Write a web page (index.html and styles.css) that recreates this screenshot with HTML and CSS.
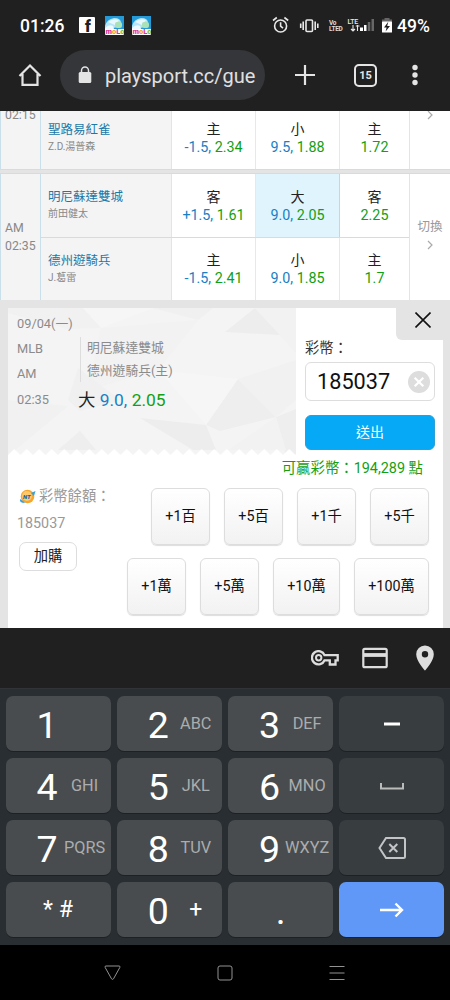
FILE: index.html
```html
<!DOCTYPE html>
<html lang="zh-Hant">
<head>
<meta charset="utf-8">
<title>playsport.cc</title>
<link rel="stylesheet" href="styles.css">
</head>
<body>
<header class="status">
  <span class="clock">01:26</span>
  <svg class="fb" width="16" height="16" viewBox="0 0 16 16"><rect width="16" height="16" rx="1" fill="#fff"/><text x="6" y="14.500" class="fb-f">f</text></svg>
  <svg class="molo" width="19" height="19" viewBox="0 0 19 19"><rect width="19" height="19" rx="1" fill="#fff"/><rect width="19" height="13" fill="#249bd8"/><path d="M0 10Q2 3 9 2Q16 2 16 7L12 11L5 13H0Z" fill="#b5e5f8"/><path d="M0 12Q4 8 8 10L9 13H0Z" fill="#eefaff"/><path d="M3 6Q8 2 14 4L10 9Z" fill="#e9f8ff"/><rect x="10" y="6" width="7" height="6" rx="2" fill="#a9e2b6"/><text x="0.5" y="17.8" class="molo-t"><tspan fill="#e0389a">m</tspan><tspan fill="#f59a22">o</tspan><tspan fill="#e0389a">L</tspan><tspan fill="#83bd38">o</tspan></text></svg>
  <svg class="molo" width="19" height="19" viewBox="0 0 19 19"><rect width="19" height="19" rx="1" fill="#fff"/><rect width="19" height="13" fill="#249bd8"/><path d="M0 10Q2 3 9 2Q16 2 16 7L12 11L5 13H0Z" fill="#b5e5f8"/><path d="M0 12Q4 8 8 10L9 13H0Z" fill="#eefaff"/><path d="M3 6Q8 2 14 4L10 9Z" fill="#e9f8ff"/><rect x="10" y="6" width="7" height="6" rx="2" fill="#a9e2b6"/><text x="0.5" y="17.8" class="molo-t"><tspan fill="#e0389a">m</tspan><tspan fill="#f59a22">o</tspan><tspan fill="#e0389a">L</tspan><tspan fill="#83bd38">o</tspan></text></svg>
  <svg class="sys" width="124" height="20" viewBox="0 0 124 20">
    <g fill="none" stroke="#e8e8e8" stroke-width="1.6"><circle cx="8.6" cy="11" r="6"/><path d="M8.6 7.3V11.2L11 13.2M1 5.5L4.8 2.5M12.4 2.5L16.2 5.5"/>
    <rect x="34" y="5" width="6.5" height="11.5" rx="1"/><path d="M31.2 6.5V15M43.2 6.5V15M28.7 8.5V13M45.8 8.5V13"/></g>
    <text x="57" y="9.5" class="tiny">Vo</text><text x="57" y="15.6" class="tiny">LTED</text>
    <text x="75.5" y="8.8" class="lte">LTE</text><path d="M81 10V16M79 14L81 16L83 14M85.5 16V10M83.8 11H87.5" stroke="#e8e8e8" stroke-width="1.1" fill="none"/>
    <path d="M88 12.5h3V16h-3zM92 10h2.500v6H92z" fill="#fff"/><path d="M95.800 7h2.500v9h-2.500zM99.500 4h2.500v12h-2.500z" fill="#676767"/>
    <path d="M112.500 3h5v1.500h2.500V8h-10V4.500h2.500z" fill="#666"/><rect x="110" y="6.500" width="10" height="11" rx=".6" fill="#fff"/><path d="M116.300 6.800L112 12.600h2.600l-1 4L118 11h-2.800z" fill="#202020"/>
  </svg>
  <span class="battery">49%</span>
</header>

<nav class="toolbar">
  <svg class="home" width="24" height="24" viewBox="0 0 24 24"><path d="M1.500 13L12 2.500L22.500 13M4.500 11V21.800H19.500V11" fill="none" stroke="#e4e4e4" stroke-width="2.200"/></svg>
  <div class="url">
    <svg width="14" height="18" viewBox="0 0 14 18"><rect x=".7" y="6" width="12.600" height="11" rx="1.500" fill="#e4e4e4"/><path d="M3.500 7V4.500a3.500 3.500 0 0 1 7 0V7" fill="none" stroke="#e4e4e4" stroke-width="1.500"/></svg>
    <span>playsport.cc/gue</span>
  </div>
  <svg class="plus" width="20" height="20" viewBox="0 0 20 20"><path d="M10 0V20M0 10H20" stroke="#e4e4e4" stroke-width="2.200"/></svg>
  <span class="tabs">15</span>
  <svg class="dots" width="6" height="22" viewBox="0 0 6 22"><g fill="#e4e4e4"><circle cx="3" cy="3.500" r="2.700"/><circle cx="3" cy="11" r="2.700"/><circle cx="3" cy="18.500" r="2.700"/></g></svg>
</nav>

<main class="page">
  <section class="game game-cut">
    <div class="time"><span>02:15</span></div>
    <div class="rows">
      <div class="row">
        <div class="team"><b>聖路易紅雀</b><i>Z.D.湯普森</i></div>
        <div class="odd"><b>主</b><p><em>-1.5,</em> 2.34</p></div>
        <div class="odd"><b>小</b><p><em>9.5,</em> 1.88</p></div>
        <div class="odd"><b>主</b><p>1.72</p></div>
      </div>
    </div>
    <div class="switch"><svg width="6" height="10" viewBox="0 0 6 10"><path d="M1 1L5 5L1 9" fill="none" stroke="#aaa" stroke-width="1.200"/></svg></div>
  </section>
  <section class="game">
    <div class="time"><span>AM</span><span>02:35</span></div>
    <div class="rows">
      <div class="row">
        <div class="team"><b>明尼蘇達雙城</b><i>前田健太</i></div>
        <div class="odd"><b>客</b><p><em>+1.5,</em> 1.61</p></div>
        <div class="odd picked"><b>大</b><p><em>9.0,</em> 2.05</p></div>
        <div class="odd"><b>客</b><p>2.25</p></div>
      </div>
      <div class="row">
        <div class="team"><b>德州遊騎兵</b><i>J.葛雷</i></div>
        <div class="odd"><b>主</b><p><em>-1.5,</em> 2.41</p></div>
        <div class="odd"><b>小</b><p><em>9.0,</em> 1.85</p></div>
        <div class="odd"><b>主</b><p>1.7</p></div>
      </div>
    </div>
    <div class="switch"><span>切換</span><svg width="6" height="10" viewBox="0 0 6 10"><path d="M1 1L5 5L1 9" fill="none" stroke="#aaa" stroke-width="1.200"/></svg></div>
  </section>

  <section class="slip">
    <div class="slip-top">
      <div class="ticket">
        <svg class="facets" width="288" height="148" viewBox="0 0 288 148">
          <defs><pattern id="zig" width="12.500" height="6" patternUnits="userSpaceOnUse" y="141"><path d="M0 6L6.250 0L12.500 6Z" fill="#fff"/></pattern></defs>
          <rect width="288" height="148" fill="#f4f4f4"/>
          <path d="M0 0H75L93 20L60 21L0 5Z" fill="#f1f1f1"/><path d="M75 0H145L93 20Z" fill="#f6f6f6"/>
          <path d="M145 0H205L190 12Z" fill="#f0f0f0"/><path d="M93 20L190 12L150 62L80 82Z" fill="#f2f2f2"/>
          <path d="M247 0L217 24L272 27Z" fill="#ededed"/><path d="M247 0H288V45L272 27Z" fill="#f2f2f2"/>
          <path d="M60 92L70 60L112 92L72 103Z" fill="#f0f0f0"/><path d="M0 92L60 98L0 148Z" fill="#f1f1f1"/>
          <path d="M132 110L198 117L208 142H185Z" fill="#ededed"/><path d="M72 123L88 142H50Z" fill="#eee"/>
          <path d="M198 117L230 71L268 109L212 123Z" fill="#eee"/><path d="M230 71L268 109L288 92V52Z" fill="#f1f1f1"/>
          <path d="M268 109L288 101V148H278Z" fill="#eee"/><path d="M268 109L278 142H220Z" fill="#f2f2f2"/>
          <path d="M150 62L230 71L198 117Z" fill="#f6f6f6"/>
          <rect y="141" width="288" height="6" fill="url(#zig)"/><rect y="147" width="288" height="2" fill="#fff"/>
        </svg>
        <div class="when"><span>09/04(一)</span><span>MLB</span><span>AM</span><span>02:35</span></div>
        <div class="match">
          <div class="teams"><span>明尼蘇達雙城</span><span>德州遊騎兵(主)</span></div>
          <div class="choice"><b>大</b> <em>9.0,</em> <strong>2.05</strong></div>
        </div>
      </div>
      <div class="stake">
        <div class="close"><svg width="16" height="16" viewBox="0 0 16 16"><path d="M.5 .5L15.500 15.500M15.500 .5L.5 15.500" stroke="#111" stroke-width="1.600"/></svg></div>
        <label>彩幣：</label>
        <div class="amount"><span>185037</span><svg width="22" height="22" viewBox="0 0 22 22"><circle cx="11" cy="11" r="11" fill="#ddd"/><path d="M6.700 6.700L15.300 15.300M15.300 6.700L6.700 15.300" stroke="#fff" stroke-width="2.200"/></svg></div>
        <div class="send">送出</div>
      </div>
    </div>
    <div class="win">可贏彩幣：194,289 點</div>
    <div class="slip-bottom">
      <div class="balance">
        <div class="coin"><svg width="17" height="17" viewBox="0 0 17 17"><circle cx="8.500" cy="8.500" r="6.800" fill="#f8a52d"/><circle cx="8" cy="8" r="5" fill="#ffc96b"/><path d="M1 11Q0 15 6 15L4 13ZM12 5L16.500 3L15 8Z" fill="#32a2e2"/><text x="4" y="11" class="nt">NT</text></svg><span>彩幣餘額：</span></div>
        <div class="points">185037</div>
        <div class="buy">加購</div>
      </div>
      <div class="chips">
        <div class="chip-row"><span>+1百</span><span>+5百</span><span>+1千</span><span>+5千</span></div>
        <div class="chip-row"><span>+1萬</span><span>+5萬</span><span class="w67">+10萬</span><span class="w75">+100萬</span></div>
      </div>
    </div>
  </section>
</main>

<div class="autofill">
  <svg width="28" height="16" viewBox="0 0 28 16"><path d="M13.600 5.200H26.700V10.300H24.500V14.500H18.800V10.300H13.600A6.600 6.600 0 1 1 13.600 5.200Z" fill="none" stroke="#ddd" stroke-width="2.300"/><circle cx="7.700" cy="7.800" r="2.700" fill="none" stroke="#ddd" stroke-width="2"/></svg>
  <svg width="26" height="22" viewBox="0 0 26 22"><rect x="1.300" y="1.800" width="23.400" height="18.400" rx="1.500" fill="none" stroke="#ddd" stroke-width="2.200"/><path d="M1 8H25" stroke="#ddd" stroke-width="3.800"/></svg>
  <svg width="18" height="26" viewBox="0 0 18 26"><path d="M9 .5A8.700 8.700 0 0 0 .2 9.200C.2 16 9 25.500 9 25.500S17.800 16 17.800 9.200A8.700 8.700 0 0 0 9 .5ZM9 6A3.200 3.200 0 1 1 9 12.400A3.200 3.200 0 0 1 9 6Z" fill="#ddd"/></svg>
</div>

<section class="keyboard">
  <div class="key"><b>1</b></div><div class="key"><b>2</b><i>ABC</i></div><div class="key"><b>3</b><i>DEF</i></div>
  <div class="key fn"><svg width="16" height="4" viewBox="0 0 16 4"><path d="M0 2H16" stroke="#fff" stroke-width="3"/></svg></div>
  <div class="key"><b>4</b><i>GHI</i></div><div class="key"><b>5</b><i>JKL</i></div><div class="key"><b>6</b><i>MNO</i></div>
  <div class="key fn"><svg width="24" height="8" viewBox="0 0 24 8"><path d="M1 1V6.500H23V1" fill="none" stroke="#bbb" stroke-width="2"/></svg></div>
  <div class="key"><b>7</b><i>PQRS</i></div><div class="key"><b>8</b><i>TUV</i></div><div class="key"><b>9</b><i>WXYZ</i></div>
  <div class="key fn"><svg width="28" height="22" viewBox="0 0 28 22"><path d="M8 1H25.500Q27 1 27 2.500V19.500Q27 21 25.500 21H8L1.500 11Z" fill="none" stroke="#c2c4c5" stroke-width="2"/><path d="M11.300 7L19.300 15M19.300 7L11.300 15" stroke="#c2c4c5" stroke-width="2"/></svg></div>
  <div class="key sym"><span>* #</span></div><div class="key"><b>0</b><i class="plus-sign">+</i></div><div class="key dot"><b>.</b></div>
  <div class="key fn go"><svg width="24" height="16" viewBox="0 0 24 16"><path d="M0 8H22M15.500 1.500L22 8L15.500 14.500" fill="none" stroke="#fff" stroke-width="2.400"/></svg></div>
</section>

<footer class="sysnav">
  <svg width="17" height="16" viewBox="0 0 17 16"><path d="M2 1H15Q16.500 1 15.800 2.500L9.500 13.800Q8.500 15 7.500 13.800L1.200 2.500Q.5 1 2 1Z" fill="none" stroke="#929292"/></svg>
  <svg width="16" height="16" viewBox="0 0 16 16"><rect x="1" y="1" width="14" height="14" rx="2" fill="none" stroke="#929292"/></svg>
  <svg width="16" height="16" viewBox="0 0 16 16"><path d="M.5 1.500H15.500M.5 8H15.500M.5 14.500H15.500" stroke="#929292"/></svg>
</footer>
</body>
</html>
```
FILE: styles.css
```css
* { box-sizing: border-box; }
body { margin: 0; width: 450px; height: 1000px; overflow: hidden; background: #000; font-family: Roboto, "Noto Sans CJK TC", sans-serif; }
b, i, em, strong { font-weight: 400; font-style: normal; }
svg { display: block; flex: none; }
.status { height: 50px; background: #202020; display: flex; align-items: center; color: #fff; font-size: 17.500px; font-weight: 500; padding-left: 20px; }
.clock { width: 59px; line-height: 20px; padding-top: 1px; }
.fb-f { font: 900 16px Roboto, sans-serif; fill: #202020; }
.molo { margin-left: 9.500px; }
.molo + .molo { margin-left: 8.500px; }
.molo-t { font: 900 7.500px Roboto, sans-serif; }
.sys { margin-left: 121px; }
.tiny { font: 700 6.500px Roboto, sans-serif; fill: #ddd; letter-spacing: -.3px; }
.lte { font: 500 7px Roboto, sans-serif; fill: #e8e8e8; letter-spacing: -.2px; }
.battery { margin-left: 1px; line-height: 20px; padding-top: 1px; }
.toolbar { height: 61px; background: #202020; display: flex; align-items: flex-start; padding-left: 18px; }
.home { margin-top: 13px; }
.url { margin-left: 18px; width: 205px; height: 50px; border-radius: 25px; background: #35363a; display: flex; align-items: center; padding-left: 18px; gap: 13px; color: #e0e0e0; font-size: 20px; line-height: 24px; }
.url span { padding-top: 2px; }
.plus { margin: 15px 0 0 30px; }
.tabs { margin: 14px 0 0 39px; width: 23px; height: 23px; border: 2px solid #e4e4e4; border-radius: 5px; color: #e4e4e4; font-size: 11px; font-weight: 700; line-height: 19px; text-align: center; }
.dots { margin: 14px 0 0 35px; }

.page { height: 517px; overflow: hidden; background: #e4e4e4; }
.game { display: flex; height: 127px; border-top: 1px solid #c9dfea; border-left: 1px solid #c9dfea; background: #fff; }
.game-cut { height: 59px; margin-bottom: 3px; border-top: 0; border-bottom: 1px solid #c9dfea; }
.time { width: 40px; border-right: 1px solid #c9dfea; background: #f4f4f4; color: #888; font-size: 12.300px; line-height: 18px; padding-left: 4px; display: flex; flex-direction: column; justify-content: center; }
.game-cut .time { justify-content: flex-start; line-height: 9px; }
.rows { width: 368px; }
.row { display: flex; height: 63px; }
.row + .row { border-top: 1px solid #c9dfea; }
.game-cut .row { height: 58px; }
.team { width: 131px; background: #f4f4f4; border-right: 1px solid #dce6eb; padding: 14px 0 0 7px; }
.game-cut .team { padding-top: 10px; }
.row + .row .team { padding-top: 14px; }
.team b { display: block; color: #1c78a7; font-size: 12.500px; line-height: 18px; }
.team i { display: block; color: #888; font-size: 10px; line-height: 16px; }
.odd { width: 84px; border-right: 1px solid #e1eaef; text-align: center; padding-top: 14px; color: #12a012; }
.odd:last-child { width: 69px; border-right: 0; }
.game-cut .odd { padding-top: 9px; }
.row + .row .odd { padding-top: 13px; }
.odd b { display: block; color: #222; font-size: 14px; line-height: 19px; }
.odd p { margin: 0; font-size: 14.300px; line-height: 17px; }
em { color: #1880c4; }
.picked { background: #e0f4fe; border-right-color: #b9dbe9; }
.switch { flex: 1; border-left: 1px solid #dce6eb; display: flex; flex-direction: column; align-items: center; justify-content: center; gap: 6px; color: #999; font-size: 12.500px; line-height: 14px; padding-bottom: 5px; }
.game-cut .switch { justify-content: flex-start; }
.game-cut .switch svg { margin-top: -1px; }

.slip { margin: 8px 7px 0 8px; height: 322px; background: #fff; }
.slip-top { display: flex; height: 148px; }
.ticket { position: relative; width: 288px; display: flex; color: #8b8b8b; font-size: 12.800px; }
.facets { position: absolute; left: 0; top: 0; }
.when, .match { position: relative; display: flex; flex-direction: column; }
.when { width: 64px; padding: 3px 0 0 9px; line-height: 25.200px; }
.when span { white-space: nowrap; }
.teams { display: flex; flex-direction: column; margin: 29px 0 0 8px; padding-left: 6px; border-left: 1px solid #ddd; line-height: 23px; height: 45px; white-space: nowrap; }
.teams span { position: relative; top: -1px; }
.choice { margin: 6px 0 0 6px; color: #222; font-size: 17.400px; line-height: 24px; white-space: nowrap; }
.choice strong { color: #12a012; }
.stake { width: 147px; padding-left: 9px; display: flex; flex-direction: column; }
.close { align-self: flex-end; width: 47px; height: 32px; background: #e4e4e4; border-bottom-left-radius: 6px; padding: 4px 0 0 19px; }
.stake label { color: #333; font-size: 14.300px; line-height: 16px; }
.amount { width: 130px; height: 39px; margin-top: 6px; border: 1px solid #ddd; border-radius: 6px; display: flex; align-items: center; justify-content: space-between; padding: 0 4px 0 11px; font-size: 21.700px; color: #111; line-height: 28px; }
.send { width: 130px; height: 35px; margin-top: 14px; background: #06a9f6; border: 1px solid #2b9fd6; border-radius: 6px; text-align: center; color: #fff; font-size: 14px; line-height: 33px; }
.win { height: 32px; padding-right: 20px; text-align: right; color: #12a012; font-size: 14.400px; line-height: 25px; }
.slip-bottom { display: flex; justify-content: space-between; padding: 0 14px 0 9px; }
.balance { color: #999; font-size: 14.300px; }
.coin { display: flex; align-items: center; gap: 3px; height: 16px; line-height: 16px; padding-left: 2px; }
.nt { font: italic 900 6px Roboto, sans-serif; fill: #1765b0; }
.points { line-height: 20px; margin-top: 9px; }
.buy { width: 58px; height: 29px; margin: 9px 0 0 2px; border: 1px solid #ddd; border-radius: 7px; background: #fff; color: #222; text-align: center; line-height: 26px; }
.chips { display: flex; flex-direction: column; gap: 13px; }
.chip-row { display: flex; justify-content: flex-end; gap: 14px; }
.chip-row span { width: 59px; height: 57px; border: 1px solid #ddd; border-radius: 6px; background: linear-gradient(#fff, #f2f2f2); box-shadow: 0 1px 1px #ddd; text-align: center; font-size: 14.300px; line-height: 55px; color: #111; }
.chip-row .w67 { width: 67px; }
.chip-row .w75 { width: 75px; }

.autofill { height: 61px; background: #202020; border-bottom: 1px solid #303437; display: flex; align-items: center; justify-content: flex-end; padding-right: 16px; }
.autofill svg + svg { margin-left: 23px; }
.autofill svg:last-child { margin-left: 28px; }
.keyboard { height: 256px; background: #292e32; display: grid; grid-template-columns: repeat(4, 105px); grid-auto-rows: 55px; gap: 7px 6.300px; padding: 7px 0 0 5.500px; }
.key { border-radius: 7px; background: #484c4e; box-shadow: 0 1px 0 #1d2124; color: #fff; display: flex; align-items: center; padding-left: 22px; }
.key b { width: 39px; display: flex; justify-content: center; font-size: 37.500px; line-height: 44px; padding-top: 3px; }
.key i { width: 36px; display: flex; justify-content: center; font-size: 16.300px; line-height: 20px; padding-top: 1px; color: #abadae; }
.key .plus-sign { color: #fff; font-size: 23px; }
.key.fn { background: #383d40; justify-content: center; padding: 0; }
.key.go { background: #6098f7; }
.key.sym { justify-content: center; padding: 0; font-size: 23px; line-height: 28px; }
.key.dot { padding-left: 33px; }
.sysnav { height: 55px; background: #000; display: flex; align-items: center; justify-content: space-between; padding: 0 105px 0 104px; }
```
